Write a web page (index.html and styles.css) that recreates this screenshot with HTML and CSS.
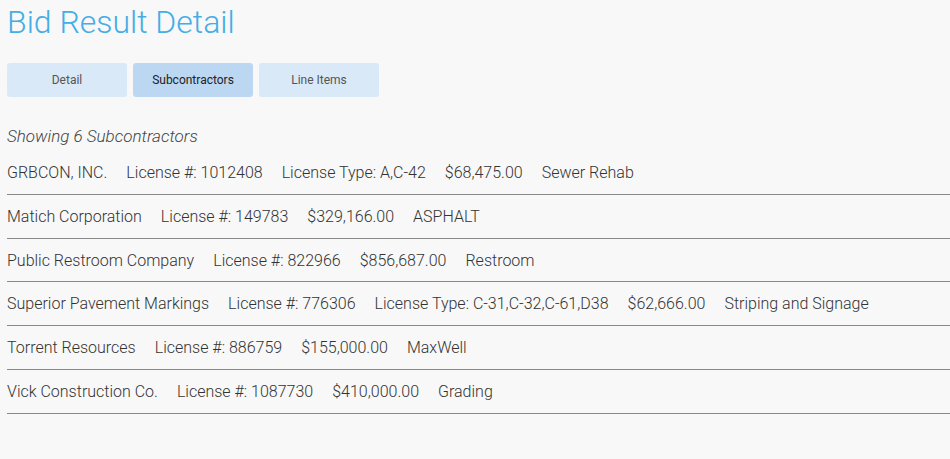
FILE: index.html
```html
<!DOCTYPE html>
<html>
<head>
<meta charset="utf-8">
<link rel="stylesheet" href="styles.css">
</head>
<body>
<div class="page">
  <h1 class="title">Bid Result Detail</h1>
  <div class="tabs">
    <div class="tab">Detail</div>
    <div class="tab active">Subcontractors</div>
    <div class="tab">Line Items</div>
  </div>
  <div class="showing">Showing 6 Subcontractors</div>
  <div class="list">
    <div class="row"><span>GRBCON, INC.</span><span>License #: 1012408</span><span>License Type: A,C-42</span><span>$68,475.00</span><span>Sewer Rehab</span></div>
    <div class="row"><span>Matich Corporation</span><span>License #: 149783</span><span>$329,166.00</span><span>ASPHALT</span></div>
    <div class="row"><span>Public Restroom Company</span><span>License #: 822966</span><span>$856,687.00</span><span>Restroom</span></div>
    <div class="row"><span>Superior Pavement Markings</span><span>License #: 776306</span><span>License Type: C-31,C-32,C-61,D38</span><span>$62,666.00</span><span>Striping and Signage</span></div>
    <div class="row"><span>Torrent Resources</span><span>License #: 886759</span><span>$155,000.00</span><span>MaxWell</span></div>
    <div class="row"><span>Vick Construction Co.</span><span>License #: 1087730</span><span>$410,000.00</span><span>Grading</span></div>
  </div>
</div>
</body>
</html>
```
FILE: styles.css
```css
html, body {
  margin: 0;
  padding: 0;
  background: #f8f8f8;
}
body {
  font-family: Roboto, "Liberation Sans", sans-serif;
  font-weight: 300;
  color: #333;
}
.page {
  padding: 4px 0 0 7px;
}
.title {
  margin: 0;
  font-size: 32px;
  font-weight: 300;
  line-height: 37px;
  color: #44ade6;
}
.tabs {
  display: flex;
  gap: 6px;
  margin-top: 22px;
}
.tab {
  width: 120px;
  height: 34px;
  display: flex;
  align-items: center;
  justify-content: center;
  background: #dae9f8;
  border-radius: 3px;
  font-size: 12px;
  font-weight: 400;
  color: #555;
}
.tab.active {
  background: #bcd7f1;
  color: #222;
}
.showing {
  margin-top: 29px;
  font-size: 17px;
  line-height: 20px;
  font-style: italic;
  color: #444;
}
.list {
  margin-top: 5px;
}
.row {
  display: flex;
  gap: 19px;
  padding: 12px 0 11.8px;
  font-size: 16px;
  line-height: 19px;
  border-bottom: 1px solid #888;
}
```
